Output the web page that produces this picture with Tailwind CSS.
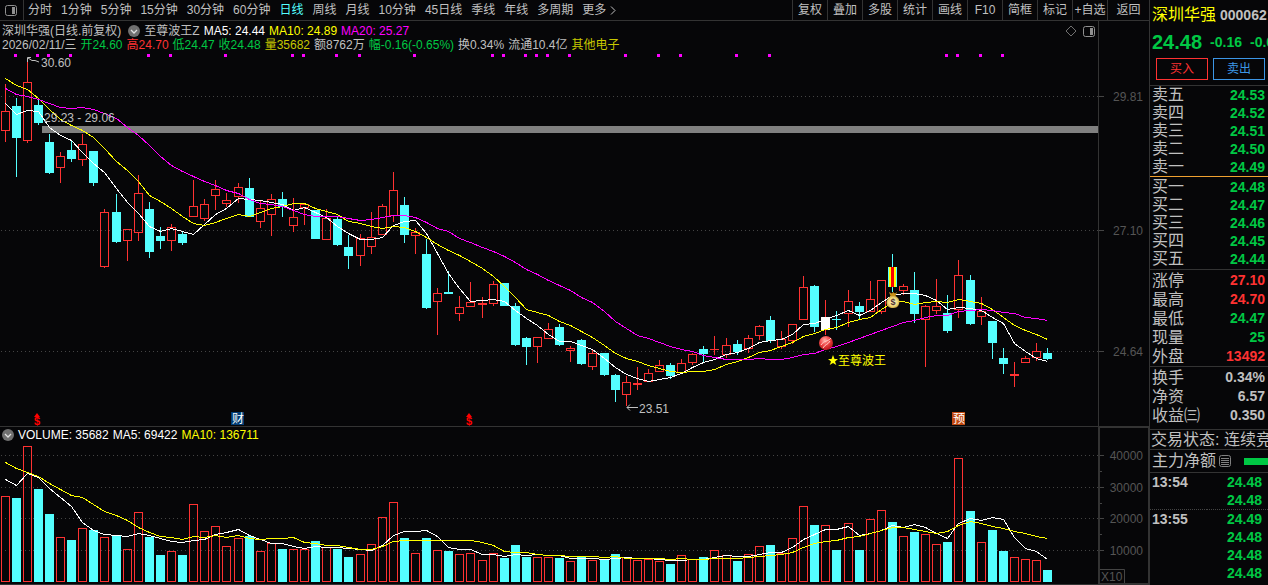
<!DOCTYPE html>
<html lang="zh-CN">
<head>
    <meta charset="UTF-8">
    <meta name="viewport" content="width=device-width, initial-scale=1.0">
    <title>深圳华强 000062</title>
    <script src="https://cdn.jsdelivr.net/npm/@tailwindcss/browser@4"></script>
</head>
<body class="bg-[#060608] text-[#c0c0c0] font-['Liberation_Sans','Noto_Sans_CJK_SC',sans-serif] text-[12px] overflow-x-hidden">
    <div class="flex min-h-screen whitespace-nowrap">
        <main class="flex-1 min-w-0 overflow-hidden">
            <!-- Toolbar -->
            <nav class="flex justify-between h-[21px] border-b border-[#333]">
                <div class="flex items-center gap-[9px] leading-[20px]">
                    <button class="h-5 w-6 pl-[5px] -mr-[5px] border-r border-[#333]" aria-label="侧栏">
                        <svg width="12" height="11" viewBox="0 0 12 11"><rect x="0.5" y="0.5" width="11" height="10" rx="2" fill="none" stroke="#909090"/><rect x="7" y="2" width="3" height="7" fill="#909090"/></svg>
                    </button>
                    <button>分时</button>
                    <button>1分钟</button>
                    <button>5分钟</button>
                    <button>15分钟</button>
                    <button>30分钟</button>
                    <button>60分钟</button>
                    <button class="text-[#54ffff]">日线</button>
                    <button>周线</button>
                    <button>月线</button>
                    <button>10分钟</button>
                    <button>45日线</button>
                    <button>季线</button>
                    <button>年线</button>
                    <button>多周期</button>
                    <button class="flex items-center gap-1">更多
                        <svg width="6" height="9" viewBox="0 0 6 9" fill="none" stroke="#c0c0c0"><path d="M1 0.5L5 4.5L1 8.5"/></svg>
                    </button>
                </div>
                <div class="flex leading-[20px]">
                    <button class="w-[35px] border-l border-[#333]">复权</button>
                    <button class="w-[35px] border-l border-[#333]">叠加</button>
                    <button class="w-[35px] border-l border-[#333]">多股</button>
                    <button class="w-[35px] border-l border-[#333]">统计</button>
                    <button class="w-[35px] border-l border-[#333]">画线</button>
                    <button class="w-[35px] border-l border-[#333]">F10</button>
                    <button class="w-[35px] border-l border-[#333]">简框</button>
                    <button class="w-[35px] border-l border-[#333]">标记</button>
                    <button class="w-[35px] border-l border-[#333]">+自选</button>
                    <button class="w-[42px] border-l border-[#333]">返回</button>
                </div>
            </nav>

            <!-- Price panel -->
            <section class="flex border-b border-[#333]">
                <div class="flex-1 min-w-0">
                    <div class="pt-[3px] pl-[2px] leading-[14px]">
                        <div class="flex items-center gap-1 h-[14px]">
                            <span class="pr-[3px]">深圳华强(日线.前复权)</span>
                            <button aria-label="指标">
                                <svg width="12" height="12" viewBox="0 0 12 12"><circle cx="6" cy="6" r="6" fill="#707070"/><path d="M3 5L6 8L9 5" fill="none" stroke="#e0e0e0" stroke-width="1.3"/></svg>
                            </button>
                            <span>至尊波王Z</span>
                            <span class="text-white">MA5: 24.44</span>
                            <span class="text-[#ff0]">MA10: 24.89</span>
                            <span class="text-[#f0f]">MA20: 25.27</span>
                            <span class="flex items-center gap-[6px] ml-auto pr-[3px]">
                                <svg width="12" height="12" viewBox="0 0 12 12" fill="none" stroke="#707070"><path d="M6 1L11 6L6 11L1 6Z"/></svg>
                                <svg width="12" height="11" viewBox="0 0 12 11"><rect x="0.5" y="0.5" width="11" height="10" rx="2" fill="none" stroke="#909090"/><rect x="7" y="2" width="3" height="7" fill="#909090"/></svg>
                            </span>
                        </div>
                        <div class="flex items-center gap-1 h-[14px]">
                            <span>2026/02/11/三</span>
                            <span class="text-[#00c844]">开24.60</span>
                            <span class="text-[#ff3232]">高24.70</span>
                            <span class="text-[#00c844]">低24.47</span>
                            <span class="text-[#00c844]">收24.48</span>
                            <span class="text-[#c8c800]">量35682</span>
                            <span>额8762万</span>
                            <span class="text-[#00c844]">幅-0.16(-0.65%)</span>
                            <span>换0.34%</span>
                            <span>流通10.4亿</span>
                            <span class="text-[#c8c800]">其他电子</span>
                        </div>
                    </div>
                    <svg id="price" class="block w-full h-[374px]"></svg>
                </div>
                <svg class="block w-[51px] h-[405px] border-l border-[#333]" fill="#555" stroke="none">
                    <path d="M0 75.5h5M0 209.5h5M0 330.5h5" stroke="#444"/>
                    <g text-anchor="end">
                        <text x="44" y="80">29.81</text>
                        <text x="44" y="214">27.10</text>
                        <text x="44" y="335">24.64</text>
                    </g>
                </svg>
            </section>

            <!-- Volume panel -->
            <section class="flex">
                <div class="flex-1 min-w-0 border-b border-[#333]">
                    <div class="flex items-center gap-1 h-4 pl-[2px] text-white">
                        <button aria-label="成交量">
                            <svg width="12" height="12" viewBox="0 0 12 12"><circle cx="6" cy="6" r="6" fill="#707070"/><path d="M3 5L6 8L9 5" fill="none" stroke="#e0e0e0" stroke-width="1.3"/></svg>
                        </button>
                        <span>VOLUME: 35682</span>
                        <span>MA5: 69422</span>
                        <span class="text-[#ff0]">MA10: 136711</span>
                    </div>
                    <svg id="volume" class="block w-full h-[141px]"></svg>
                </div>
                <svg class="block w-[51px] h-[158px] border-l-2 border-r border-t border-b-2 border-[#333]" fill="#555">
                    <path d="M0 27.5h4M0 59.5h4M0 90.5h4M0 122.5h4M0 43.5h2M0 75.5h2M0 106.5h2" stroke="#444"/>
                    <g text-anchor="end">
                        <text x="43" y="32">40000</text>
                        <text x="43" y="64">30000</text>
                        <text x="43" y="95">20000</text>
                        <text x="43" y="127">10000</text>
                    </g>
                    <path d="M0 141.5h24.5v14" fill="none" stroke="#444"/>
                    <text x="1" y="153">X10</text>
                </svg>
            </section>
        </main>

        <!-- Quote sidebar -->
        <aside class="w-[119px] shrink-0 overflow-hidden border-l border-[#333] text-[14px]">
            <header class="border-b border-[#333] pb-[5px]">
                <div class="flex items-center gap-1 h-[30px] pl-[2px]">
                    <h1 class="text-[16px] text-[#ff0]">深圳华强</h1>
                    <span class="font-bold">000062</span>
                </div>
                <div class="flex items-center gap-2 h-6 pl-[2px] text-[#00c844]">
                    <strong class="text-[20px]">24.48</strong>
                    <span class="font-bold">-0.16</span>
                    <span class="font-bold">-0.65%</span>
                </div>
                <div class="flex gap-[5px] pt-1 pl-[6px] pr-[3px] text-[12px]">
                    <button class="flex-1 h-[22px] border border-[#ff3232] text-[#ff3232]">买入</button>
                    <button class="flex-1 h-[22px] border border-[#3c96e6] text-[#3c96e6]">卖出</button>
                </div>
            </header>

            <div class="border-b border-[#f0a030]"><table id="asks" class="w-full"></table></div>
            <div class="py-px border-b border-[#333]"><table id="bids" class="w-full"></table></div>
            <div class="pt-px border-b border-[#333]"><table id="stats" class="w-full"></table></div>
            <div class="pt-px pb-1 border-b border-[#333]"><table id="ratios" class="w-full"></table></div>

            <div class="h-5 leading-[19px] text-[16px] pl-px border-b border-[#333]">交易状态: 连续竞价</div>
            <div class="flex items-center h-[23px] text-[16px] pl-[2px] border-b border-[#333]">
                主力净额
                <svg class="ml-[3px] shrink-0" width="12" height="12" viewBox="0 0 12 12" fill="none" stroke="#808080"><rect x="0.5" y="0.5" width="11" height="11" rx="2"/><path d="M2 3.5h8M2 5.5h8M2 7.5h8M2 9.5h8"/></svg>
                <span class="flex-1 h-[7px] ml-[13px] bg-[#00c844]"></span>
            </div>
            <table class="w-full font-bold leading-[18px]">
                <tbody class="border-b border-dotted border-[#444]">
                    <tr><td class="p-0 pl-[2px]">13:54</td><td class="p-0 pr-[6px] text-right text-[#00c844]">24.48</td></tr>
                    <tr><td class="p-0"></td><td class="p-0 pr-[6px] text-right text-[#00c844]">24.48</td></tr>
                </tbody>
                <tbody>
                    <tr><td class="p-0 pl-[2px]">13:55</td><td class="p-0 pr-[6px] text-right text-[#00c844]">24.49</td></tr>
                    <tr><td class="p-0"></td><td class="p-0 pr-[6px] text-right text-[#00c844]">24.48</td></tr>
                    <tr><td class="p-0"></td><td class="p-0 pr-[6px] text-right text-[#00c844]">24.48</td></tr>
                    <tr><td class="p-0"></td><td class="p-0 pr-[6px] text-right text-[#00c844]">24.48</td></tr>
                </tbody>
            </table>
        </aside>
    </div>

    <script>
        const RED = '#ff3232', CYAN = '#54ffff', GREY = '#c0c0c0';
        const PRICE_TOP = 52, VOLUME_TOP = 443, VOLUME_BASE = 582;

        // kind, high, body top, body bottom, low, volume top
        const bars = [
            ['r',84,111,131,142,496],['c',98,106,138,177,498],['r',60,82,141,143,446],['c',99,105,123,125,489],['c',134,142,173,174,514],
            ['r',152,156,168,183,537],['c',141,150,159,162,540],['r',134,144,160,166,528],['c',151,151,183,186,530],['r',209,212,267,268,537],
            ['c',194,212,242,243,535],['r',229,229,241,261,549],['r',175,193,233,241,512],['c',202,209,252,258,537],['c',227,236,241,249,555],
            ['r',224,227,241,251,551],['c',231,234,243,245,555],['r',180,206,217,217,504],['r',199,204,219,221,531],['r',180,189,196,210,526],
            ['r',193,200,204,207,546],['r',183,187,197,203,538],['c',178,188,217,217,536],['r',201,208,222,228,551],['r',194,199,215,236,543],
            ['c',192,199,207,217,549],['r',198,217,226,232,549],['r',203,204,208,225,549],['c',210,210,239,239,541],['r',209,218,240,240,547],
            ['c',216,219,245,246,549],['c',235,247,256,269,557],['r',234,238,256,266,554],['r',212,237,247,254,544],['r',204,206,235,235,517],
            ['r',172,190,216,222,502],['c',197,205,235,243,538],['r',228,232,236,254,553],['c',239,254,308,309,538],['r',288,293,302,335,550],
            ['c',271,292,294,294,551],['r',296,307,314,321,554],['r',282,302,307,307,553],['r',297,303,305,318,560],['r',281,284,304,306,553],
            ['c',283,283,306,306,558],['c',303,306,345,346,545],['c',337,338,347,365,557],['r',337,337,347,363,557],['r',323,329,339,339,557],
            ['c',324,327,345,346,558],['r',346,348,351,362,561],['c',339,340,364,365,557],['r',349,353,367,370,560],['c',353,353,375,376,559],
            ['c',374,375,390,402,554],['r',376,382,395,406,557],['r',367,383,385,390,560],['r',369,373,382,382,559],['r',360,365,372,372,561],
            ['c',363,365,376,379,564],['r',359,363,373,374,555],['r',353,354,363,365,559],['c',346,349,354,363,557],['r',336,349,350,355,550],
            ['r',338,345,355,358,555],['c',340,344,352,355,561],['r',335,338,349,353,554],['r',325,326,336,340,546],['c',316,320,341,343,545],
            ['r',331,339,347,349,553],['r',324,324,341,344,538],['r',276,287,320,320,506],['c',285,286,327,332,525],['w',300,317,330,335,525],
            ['c',311,319,320,330,550],['r',290,301,314,327,523],['c',302,306,312,319,550],['r',281,299,312,312,519],['r',280,280,312,314,510],
            ['s',254,267,287,292,522],['r',284,286,291,295,536],['c',272,290,314,323,532],['r',305,306,320,367,534],['r',279,306,311,314,544],
            ['c',295,313,331,333,542],['r',260,275,310,318,458],['c',275,280,324,325,511],['r',297,311,317,325,542],['c',321,321,343,359,530],
            ['c',348,358,364,374,551],['r',362,374,376,387,557],['r',356,358,363,363,559],['r',343,351,358,361,560],['c',348,353,359,360,570]
        ];
        const ma5 = [103,114,110,111,127,135,140,152,163,172,188,202,213,226,231,228,231,234,224,214,208,198,199,200,202,204,210,207,212,217,226,233,239,239,237,225,221,220,233,253,273,288,301,300,299,301,310,318,325,334,341,341,345,349,358,367,374,378,381,379,377,373,367,362,359,354,352,348,342,340,339,334,324,323,319,315,310,315,310,302,295,293,293,295,300,309,307,308,310,317,323,343,351,358,361];
        const ma10 = [78,85,89,98,109,119,125,130,137,148,161,170,181,195,201,208,216,223,225,222,218,214,216,212,208,206,203,203,208,211,214,221,223,226,228,226,227,231,237,244,250,255,261,268,276,286,297,309,312,315,321,325,331,337,345,353,358,361,365,368,371,372,371,371,369,364,361,357,352,350,346,342,336,333,329,327,322,319,317,309,302,301,304,302,301,302,299,301,303,309,317,325,330,334,339];
        const ma20 = [88,94,96,99,103,107,108,107,109,113,118,127,135,145,156,165,171,176,181,185,190,193,199,203,204,206,210,214,216,216,216,218,220,219,217,215,215,217,222,228,231,238,242,247,251,256,262,269,274,280,285,290,297,302,311,321,328,335,338,342,346,349,351,355,357,359,359,359,358,359,359,357,354,353,349,346,342,338,334,330,326,322,320,317,315,315,311,310,309,310,312,313,317,318,320];
        const vol5 = [479,485,473,477,488,497,506,522,530,534,535,536,533,535,538,541,542,540,539,534,532,529,535,539,543,543,546,548,546,547,547,548,549,550,545,535,531,531,530,536,547,549,549,554,554,556,554,555,554,555,555,558,558,558,559,558,557,558,558,559,560,560,559,559,557,555,556,556,554,552,552,547,539,534,529,529,526,535,533,530,525,527,524,527,533,538,523,518,520,517,519,537,548,551,559];
        const vol10 = [462,468,472,476,483,489,495,497,504,511,515,520,527,532,536,537,539,536,537,535,537,535,538,539,538,538,537,542,543,545,545,547,549,549,546,541,540,540,540,540,540,540,540,542,545,551,552,552,554,555,555,556,556,556,557,556,558,558,558,558,559,558,559,559,558,558,558,557,556,555,554,552,547,543,541,540,537,536,533,530,527,527,529,531,533,531,525,521,523,526,528,531,533,536,538];
        const signals = [1,3,4,6,13,15,20,26,27,30,32,37,44,45,47,48,49,51,56,59,61,66,69,85,86,88,90];

        const barX = i => 5 + Math.floor(i * 11.09 + 0.18);
        const rect = (x, y, w, h, fill) => `<rect x="${x}" y="${y}" width="${w}" height="${h}" fill="${fill}"/>`;
        const box = (x, y, h) => `<rect x="${x - 3.5}" y="${y + 0.5}" width="8" height="${h - 1}" fill="none" stroke="${RED}"/>`;
        const grid = y => `<line x1="1" x2="100%" y1="${y + 0.5}" y2="${y + 0.5}" stroke="#444" stroke-dasharray="1 3"/>`;
        const curve = (ys, color) => `<polyline fill="none" stroke="${color}" points="${ys.map((y, i) => `${barX(i) + 0.5},${y + 0.5}`).join(' ')}"/>`;
        const text = (x, y, s, fill = GREY) => `<text x="${x}" y="${y}" fill="${fill}">${s}</text>`;

        function candle([kind, high, top, bottom, low], i) {
            const x = barX(i);
            const color = kind === 'r' || kind === 'w' ? RED : CYAN;
            let out = rect(x, high, 1, top - high, color) + rect(x, bottom, 1, low - bottom, color);
            if (kind === 'r') out += bottom - top > 2 ? box(x, top, bottom - top) : rect(x - 4, top, 9, bottom - top, RED);
            else out += rect(x - 4, top, 9, bottom - top, kind === 'w' ? '#fff' : CYAN);
            if (kind === 's') out += rect(x - 3, top, 7, bottom - top, '#ff0') + rect(x - 1, top, 3, bottom - top, '#f00');
            return out;
        }

        function dividend(x) {
            return `<g fill="#f00"><path d="M${x - 3} 417L${x} 413L${x + 3} 417Z"/><text x="${x}" y="425" text-anchor="middle" font-size="11" font-weight="bold">$</text></g>`;
        }

        function badge(x, s, fill) {
            return rect(x, 412, 13, 13, fill) + text(x + 1, 423, s, '#fff');
        }

        document.getElementById('price').innerHTML = `
            <defs>
                <radialGradient id="ball" cx="0.4" cy="0.3" r="0.7"><stop offset="0" stop-color="#ffb0a8"/><stop offset="0.5" stop-color="#f04848"/><stop offset="1" stop-color="#b81818"/></radialGradient>
                <radialGradient id="bag" cx="0.5" cy="0.5" r="0.6"><stop offset="0" stop-color="#fff8d0"/><stop offset="0.6" stop-color="#f0d878"/><stop offset="1" stop-color="#b08020"/></radialGradient>
            </defs>
            <g transform="translate(0 ${-PRICE_TOP})">
                <g shape-rendering="crispEdges">
                    ${[96, 230, 351].map(grid).join('')}
                    ${signals.map(i => rect(barX(i) - 2, 54, 3, 3, '#f0f')).join('')}
                    <rect x="42" y="126" width="100%" height="7" fill="#808080"/>
                    ${bars.map(candle).join('')}
                    ${curve(ma5, '#fff')}${curve(ma10, '#ff0')}${curve(ma20, '#f0f')}
                </g>
                <path d="M27.5 62V57.5H31M28 58L32 60.5H35L39 62" fill="none" stroke="${GREY}"/>
                ${text(41, 67, '30.60')}
                ${text(44, 122, '29.23 - 29.06')}
                <path d="M638 407.5H627M630 404.5L627 407.5L630 410.5" fill="none" stroke="${GREY}"/>
                ${text(639, 413, '23.51')}
                <circle cx="826" cy="343" r="7" fill="url(#ball)"/>
                <path d="M821 345C824 340 828 342 831 338M823 348C825 344 828 345 830 341" fill="none" stroke="#ffd0c8" stroke-width="1"/>
                <path d="M889 292L892 293.5L893 292L895 293.5L897 292L895.500 296H890.500Z" fill="#c89018"/>
                <path d="M890.500 296H895.500C899 298 900 301 899 304C898 307 896 308 893 308C889 308 887 306 886.500 303C886.500 300 888 298 890.500 296Z" fill="url(#bag)"/>
                <text x="893" y="305" text-anchor="middle" font-size="9" font-weight="bold" fill="#503030">$</text>
                <path d="M833 355L834.500 359H838L835 361.500L836.300 365L833 363L829.700 365L831 361.500L828 359H831.500Z" fill="#ff0"/>
                ${text(838, 365, '至尊波王', '#ff0')}
                ${dividend(37)}${dividend(469)}
                ${badge(231, '财', '#003c74')}${badge(952, '预', '#c04810')}
            </g>`;

        document.getElementById('volume').innerHTML = `
            <g transform="translate(0 ${-VOLUME_TOP})" shape-rendering="crispEdges">
                ${[455, 487, 518, 550].map(grid).join('')}
                ${bars.map(([kind, , , , , top], i) => kind === 'r' || kind === 'w'
                    ? box(barX(i), top, VOLUME_BASE - top)
                    : rect(barX(i) - 4, top, 9, VOLUME_BASE - top, CYAN)).join('')}
                ${curve(vol5, '#fff')}${curve(vol10, '#ff0')}
            </g>`;

        // Order book and quote figures
        const tones = { g: 'text-[#00c844]', r: 'text-[#ff3232]', w: 'text-[#c0c0c0]' };

        function fill(id, lineHeight, rows) {
            document.getElementById(id).innerHTML = rows.map(([label, value, tone]) => `
                <tr class="${lineHeight}">
                    <th scope="row" class="p-0 pl-[2px] text-left font-normal text-[16px]">${label}</th>
                    <td class="p-0 pr-[3px] text-right font-bold ${tones[tone]}">${value}</td>
                </tr>`).join('');
        }

        fill('asks', 'leading-[18px]', [['卖五', '24.53', 'g'], ['卖四', '24.52', 'g'], ['卖三', '24.51', 'g'], ['卖二', '24.50', 'g'], ['卖一', '24.49', 'g']]);
        fill('bids', 'leading-[18px]', [['买一', '24.48', 'g'], ['买二', '24.47', 'g'], ['买三', '24.46', 'g'], ['买四', '24.45', 'g'], ['买五', '24.44', 'g']]);
        fill('stats', 'leading-[19px]', [['涨停', '27.10', 'r'], ['最高', '24.70', 'r'], ['最低', '24.47', 'g'], ['现量', '25', 'g'], ['外盘', '13492', 'r']]);
        fill('ratios', 'leading-[19px]', [['换手', '0.34%', 'w'], ['净资', '6.57', 'w'], ['收益㈢', '0.350', 'w']]);
    </script>
</body>
</html>
